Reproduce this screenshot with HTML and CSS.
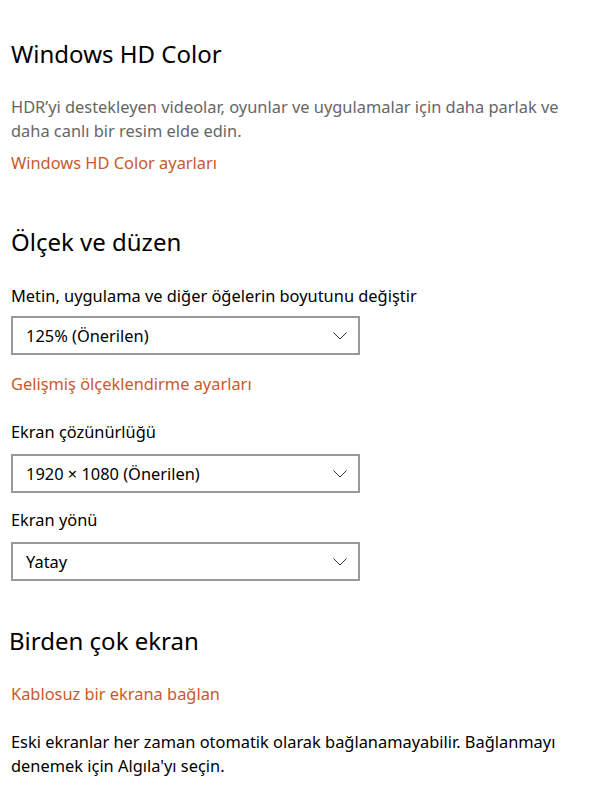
FILE: index.html
```html
<!DOCTYPE html>
<html lang="tr">
<head>
<meta charset="utf-8">
<link rel="stylesheet" href="styles.css">
</head>
<body>
<main class="page">
  <section class="section">
    <h2 class="title">Windows HD Color</h2>
    <p class="desc">HDR’yi destekleyen videolar, oyunlar ve uygulamalar için daha parlak ve daha canlı bir resim elde edin.</p>
    <a class="link">Windows HD Color ayarları</a>
  </section>

  <section class="section scale">
    <h2 class="title">Ölçek ve düzen</h2>
    <div class="field first">
      <div class="label">Metin, uygulama ve diğer öğelerin boyutunu değiştir</div>
      <div class="select"><span>125% (Önerilen)</span><svg class="chev" width="14" height="8" viewBox="0 0 14 8"><path d="M0.5 0.5 L7 7 L13.5 0.5" fill="none" stroke="#333" stroke-width="1"/></svg></div>
    </div>
    <a class="link after-select">Gelişmiş ölçeklendirme ayarları</a>
    <div class="field second">
      <div class="label">Ekran çözünürlüğü</div>
      <div class="select"><span>1920 × 1080 (Önerilen)</span><svg class="chev" width="14" height="8" viewBox="0 0 14 8"><path d="M0.5 0.5 L7 7 L13.5 0.5" fill="none" stroke="#333" stroke-width="1"/></svg></div>
    </div>
    <div class="field third">
      <div class="label">Ekran yönü</div>
      <div class="select"><span>Yatay</span><svg class="chev" width="14" height="8" viewBox="0 0 14 8"><path d="M0.5 0.5 L7 7 L13.5 0.5" fill="none" stroke="#333" stroke-width="1"/></svg></div>
    </div>
  </section>

  <section class="section multi">
    <h2 class="title">Birden çok ekran</h2>
    <a class="link wireless">Kablosuz bir ekrana bağlan</a>
    <p class="body">Eski ekranlar her zaman otomatik olarak bağlanamayabilir. Bağlanmayı denemek için Algıla'yı seçin.</p>
  </section>
</main>
</body>
</html>
```
FILE: styles.css
```css
* { box-sizing: border-box; }
html, body { margin: 0; padding: 0; background: #fff; }
body {
  font-family: "Noto Sans", "Open Sans", sans-serif;
  color: #000;
  font-size: 16.4px;
}
.page {
  padding: 38px 0 0 11px;
  width: 597px;
}
.section { display: flex; flex-direction: column; align-items: flex-start; }
.title {
  margin: 0;
  font-weight: 400;
  font-size: 24px;
  line-height: 32px;
}
.desc {
  margin: 25px 0 0;
  width: 575px;
  color: #666;
  line-height: 24px;
}
.link {
  color: #c75a2a;
  line-height: 24px;
  margin-top: 8px;
}
.scale { margin-top: 51px; }
.field { display: flex; flex-direction: column; align-items: flex-start; }
.field.first { margin-top: 26px; }
.field.second { margin-top: 24px; }
.field.third { margin-top: 15px; }
.label { line-height: 24px; }
.select {
  margin-top: 8px;
  width: 349px;
  height: 39px;
  border: 2px solid #999;
  display: flex;
  align-items: center;
  justify-content: space-between;
  padding: 0 11px 0 13px;
}
.second .select, .third .select { margin-top: 10px; }
.after-select { margin-top: 17px; }
.multi { margin-top: 44px; }
.multi .title { margin-left: -2px; }
.wireless { margin-top: 25px; }
.body { margin: 24px 0 0; width: 575px; line-height: 24px; }
```
